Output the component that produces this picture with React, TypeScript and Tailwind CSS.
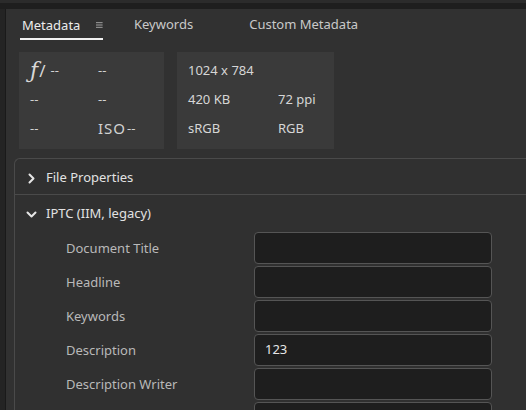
import React from "react";

const font = { fontFamily: '"Noto Sans", "Open Sans", sans-serif' };

function Chevron({ open }: { open: boolean }) {
  return (
    <svg width="11" height="11" viewBox="0 0 11 11" className="shrink-0">
      {open ? (
        <path d="M1.5 3.5 L5.5 7.5 L9.5 3.5" fill="none" stroke="#e6e6e6" strokeWidth="2" strokeLinecap="round" strokeLinejoin="round" />
      ) : (
        <path d="M3.5 1.5 L7.5 5.5 L3.5 9.5" fill="none" stroke="#e6e6e6" strokeWidth="2" strokeLinecap="round" strokeLinejoin="round" />
      )}
    </svg>
  );
}

const fields = [
  { label: "Document Title", value: "" },
  { label: "Headline", value: "" },
  { label: "Keywords", value: "" },
  { label: "Description", value: "123" },
  { label: "Description Writer", value: "" },
  { label: "", value: "" },
];

export default function App() {
  return (
    <div className="w-[526px] h-[410px] overflow-hidden bg-[#1e1e1e] flex flex-col text-[13px]" style={font}>
      <div className="h-[9px] shrink-0 border-t-[3px] border-[#2b2b2b] bg-[#1e1e1e]" />
      <div className="flex flex-1 min-h-0">
        <div className="w-[6px] shrink-0 bg-[#242424] border-r border-[#1a1a1a]" />
        <div className="flex-1 min-w-0 bg-[#313131] flex flex-col">
          {/* tabs */}
          <div className="h-[31px] flex items-end pl-[14px] shrink-0">
            <div className="flex items-center h-[29px] w-[83px] border-b-2 border-[#f0f0f0] pl-[2px] pt-[1px]">
              <span className="text-[#ececec] leading-none">Metadata</span>
              <svg width="10" height="10" viewBox="0 0 10 10" className="ml-[16px]">
                <path d="M0 1.5 H10 M0 5 H10 M0 8.5 H10" stroke="#bdbdbd" strokeWidth="1.2" />
              </svg>
            </div>
            <div className="flex items-center h-[29px] ml-[31px] text-[#c9c9c9] pb-[1px]">Keywords</div>
            <div className="flex items-center h-[29px] ml-[56px] text-[#c9c9c9] pb-[1px]">Custom Metadata</div>
          </div>
          {/* info boxes */}
          <div className="flex gap-[13px] pl-[13px] mt-[12px] shrink-0">
            <div className="w-[145px] h-[97px] bg-[#3a3a3a] grid grid-cols-[68px_1fr] grid-rows-3 pl-[11px] pt-[4px] pb-[6px] text-[#d2d2d2]">
              <div className="flex items-center">
                <span className="text-[22px] italic leading-none text-[#d8d8d8]" style={{ fontFamily: '"DejaVu Serif", serif' }}>ƒ</span>
                <span className="text-[17px] leading-none text-[#d8d8d8] ml-[1px]">/</span>
                <span className="ml-[5px]">--</span>
              </div>
              <div className="flex items-center">--</div>
              <div className="flex items-center">--</div>
              <div className="flex items-center">--</div>
              <div className="flex items-center">--</div>
              <div className="flex items-center">
                <span className="text-[15px] tracking-[1px]">ISO</span>
                <span className="ml-[1px]">--</span>
              </div>
            </div>
            <div className="w-[157px] h-[97px] bg-[#3a3a3a] grid grid-cols-[90px_1fr] grid-rows-3 pl-[11px] pt-[4px] pb-[6px] text-[#d6d6d6]">
              <div className="flex items-center col-span-2">1024 x 784</div>
              <div className="flex items-center">420 KB</div>
              <div className="flex items-center">72 ppi</div>
              <div className="flex items-center">sRGB</div>
              <div className="flex items-center">RGB</div>
            </div>
          </div>
          {/* accordion */}
          <div className="mt-[9px] ml-[8px] flex-1 border-l border-t border-[#4a4a4a] rounded-tl-[6px] bg-[#303030] flex flex-col">
            <div className="h-[36px] shrink-0 flex items-center pl-[11px] pt-[3px] border-b border-[#4a4a4a] text-[#e2e2e2]">
              <Chevron open={false} />
              <span className="ml-[9px]">File Properties</span>
            </div>
            <div className="h-[37px] shrink-0 flex items-center pl-[11px] pt-[1px] text-[#e2e2e2]">
              <Chevron open={true} />
              <span className="ml-[9px]">IPTC (IIM, legacy)</span>
            </div>
            <div className="flex flex-col gap-[2px]">
              {fields.map((f, i) => (
                <div key={i} className="flex items-center h-[32px] shrink-0">
                  <div className="w-[239px] pl-[51px] pt-[2px] text-[#b9b9b9]">{f.label}</div>
                  <div className="w-[238px] h-[32px] bg-[#1e1e1e] border border-[#555555] rounded-[4px] flex items-center pl-[10px] text-[#e6e6e6]">
                    {f.value}
                  </div>
                </div>
              ))}
            </div>
          </div>
        </div>
      </div>
    </div>
  );
}
